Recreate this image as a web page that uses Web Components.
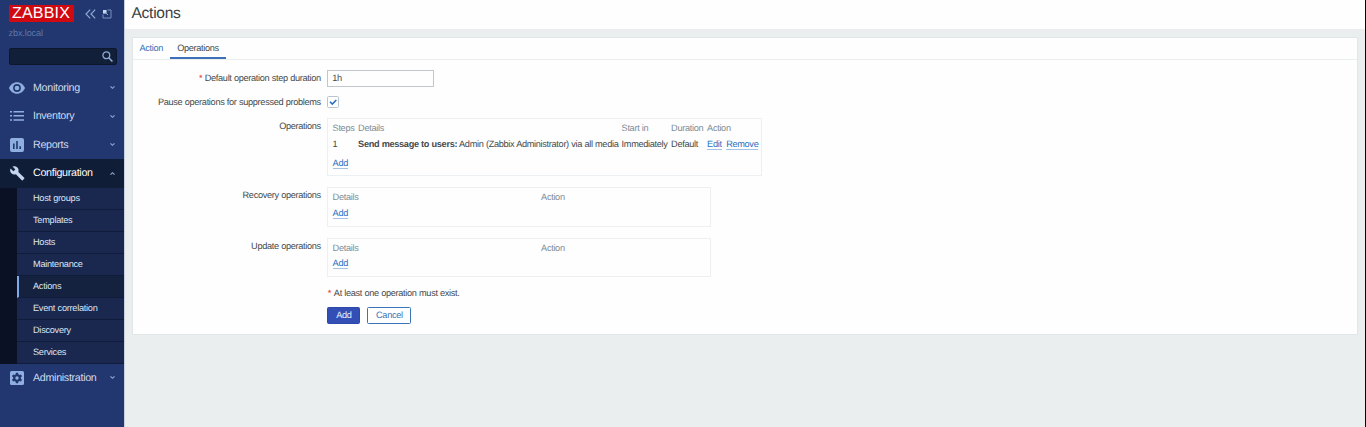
<!DOCTYPE html>
<html lang="en">
<head>
<meta charset="utf-8">
<title>Actions</title>
<style>
body{margin:0;height:427px;overflow:hidden;font:9.200px/12px "Liberation Sans",Arial,sans-serif;letter-spacing:-.32px;word-spacing:.15px;color:#43494c;text-rendering:geometricPrecision;background:#ebeeef}
</style>
</head>
<body>
<zbx-app></zbx-app>
<script>
const define=(name,html,setup)=>customElements.define(name,class extends HTMLElement{
  connectedCallback(){
    if(this.shadowRoot)return;
    const t=document.createElement('template');
    t.innerHTML=html;
    const root=this.attachShadow({mode:'open'});
    root.append(t.content.cloneNode(true));
    if(setup)setup(this,root);
  }
});

const icons={
  eye:'<path d="M8 2.200C4.400 2.200 1.300 4.600 0 8c1.300 3.400 4.400 5.800 8 5.800s6.700-2.400 8-5.800C14.700 4.600 11.600 2.200 8 2.200zm0 9.700a3.900 3.900 0 1 1 0-7.800 3.900 3.900 0 0 1 0 7.800z"/><circle cx="8" cy="8" r="2.300"/>',
  list:'<path d="M1 3h2v1.500H1zM1 7.100h2v1.500H1zM1 11.200h2v1.500H1zM4.500 3H15v1.500H4.500zM4.500 7.100H15v1.500H4.500zM4.500 11.200H15v1.500H4.500z"/>',
  chart:'<path fill-rule="evenodd" d="M3 1h10a2 2 0 0 1 2 2v10a2 2 0 0 1-2 2H3a2 2 0 0 1-2-2V3c0-1.100.9-2 2-2zm1 5.500v5.500h1.600V6.500zm3.200-2.500v8h1.600V4zm3.200 5.200V12H12V9.200z"/>',
  wrench:'<path transform="translate(.5 .5) scale(.65)" d="M22.700 19l-9.100-9.100c.9-2.300.4-5-1.500-6.900-2-2-5-2.400-7.400-1.300L9 6 6 9 1.600 4.700C.4 7.100.9 10.100 2.900 12.100c1.900 1.900 4.600 2.400 6.900 1.500l9.100 9.100c.4.400 1 .4 1.400 0l2.300-2.300c.5-.4.5-1.100.1-1.400z"/>',
  gear:'<rect x="1" y="1" width="14" height="14" rx="1.500"/><g fill="#22376f"><circle cx="8" cy="8" r="3.800"/><path d="M6.900 2.800h2.200l.5 3H6.400zM6.900 13.200h2.200l.5-3H6.400z"/><path transform="rotate(60 8 8)" d="M6.900 2.800h2.200l.5 3H6.400zM6.900 13.200h2.200l.5-3H6.400z"/><path transform="rotate(120 8 8)" d="M6.900 2.800h2.200l.5 3H6.400zM6.900 13.200h2.200l.5-3H6.400z"/></g><circle cx="8" cy="8" r="1.700"/>'
};

define('zbx-app',`<style>
:host{display:grid;grid-template-columns:124px 1fr 1px;height:427px}
.edge{background:#050708}
</style><zbx-sidebar></zbx-sidebar><zbx-page></zbx-page><div class="edge"></div>`);

define('zbx-sidebar',`<style>
:host{display:block;box-sizing:border-box;background:#22376f;color:#cfdaee;overflow:hidden}
header{display:flex;align-items:center;height:17px;padding:5px 0 0 8.500px}
.logo{background:#d10a12;color:#fff;width:65px;height:17px;border-radius:1px;font-size:16px;line-height:17px;text-align:center;letter-spacing:.2px}
.collapse{margin-left:11px}.pop{margin-left:6px}
.server{color:#5f78a8;padding:5px 0 0 8.500px;height:12px;letter-spacing:-.15px}
.search{display:flex;align-items:center;justify-content:flex-end;box-sizing:border-box;width:108px;height:17px;margin:9px 0 8.500px 8.500px;padding-right:3px;background:#121f38;border:1px solid #0c172d;border-radius:2px}
svg{display:block;fill:none;stroke:#8ea9d4}
.sub{padding-left:17px;background:#0a1124}
</style>
<header><div class="logo">ZABBIX</div>
<svg class="collapse" width="11" height="10" stroke-width="1.200"><path d="M5.200 .7L1 5l4.200 4.300M10.200 .7L6 5l4.200 4.300"/></svg>
<svg class="pop" width="10" height="10"><path d="M5.500 1h3.500v8H1V5.500" stroke="#7590bf"/><path d="M1 1h3.600v3.600H1z" fill="#c7d8f3" stroke="none"/><path d="M3.500 3.500l2.500 2.500" stroke-width="1"/></svg></header>
<div class="server">zbx.local</div>
<div class="search"><svg width="11" height="11" stroke-width="1.300"><circle cx="4.300" cy="4.300" r="3.400"/><path d="M6.800 6.800l3.600 3.700" stroke-width="1.600"/></svg></div>
<zbx-item icon="eye">Monitoring</zbx-item>
<zbx-item icon="list">Inventory</zbx-item>
<zbx-item icon="chart">Reports</zbx-item>
<zbx-item icon="wrench" open>Configuration</zbx-item>
<div class="sub">
<zbx-subitem>Host groups</zbx-subitem><zbx-subitem>Templates</zbx-subitem><zbx-subitem>Hosts</zbx-subitem><zbx-subitem>Maintenance</zbx-subitem><zbx-subitem active>Actions</zbx-subitem><zbx-subitem>Event correlation</zbx-subitem><zbx-subitem>Discovery</zbx-subitem><zbx-subitem>Services</zbx-subitem>
</div>
<zbx-item icon="gear">Administration</zbx-item>`);

define('zbx-item',`<style>
:host{display:grid;grid-template-columns:16px 1fr 7px;column-gap:8px;align-items:center;height:28.500px;padding:0 8.500px 0 9px;font-size:10.700px;letter-spacing:-.3px}
:host([open]){background:#101d37;color:#fff}
.i{fill:#8fafe0}:host([open]) .i{fill:#c4d5f1}
.c{fill:none;stroke:#8faad4;stroke-width:1.100}
:host([open]) .c{transform:rotate(180deg)}
svg{display:block}
span{padding-top:.4px}
</style><svg class="i" width="16" height="16" viewBox="0 0 16 16"></svg><span><slot></slot></span><svg class="c" width="7" height="5"><path d="M1.500 1.300l2 2 2-2"/></svg>`,
(el,r)=>{r.querySelector('.i').innerHTML=icons[el.getAttribute('icon')];});

define('zbx-subitem',`<style>
:host{display:block;box-sizing:border-box;height:22px;line-height:20px;padding-left:16px;background:#1a2850;border-bottom:1px solid #111c3c;color:#dce5f4;letter-spacing:-.27px}
:host([active]){background:#14213f;border-left:2px solid #7fa9e8;padding-left:14px}
</style><slot></slot>`);

define('zbx-page',`<style>
:host{display:block;min-width:0;border-left:1px solid #c7d0df}
h1{margin:0;height:29px;box-sizing:border-box;padding:5px 0 0 6.500px;background:#fefefe;font-size:15.600px;line-height:18px;font-weight:400;letter-spacing:-.3px;color:#3c4245}
.card{box-sizing:border-box;height:298px;margin:8px 7px 0 6.500px;background:#fefefe;border:1px solid #e1e6e8}
nav{display:flex;box-sizing:border-box;height:22px;border-bottom:1px solid #ebeeef;line-height:20px}
nav a{color:#2f72bd;padding:0 7px}
nav .on{color:#43494c;padding:0 7px;width:56px;box-sizing:border-box;height:21px;border-bottom:2px solid #3c70b8}
.foot{display:flex;gap:7px;margin:8px 0 0 194.900px}
.note{padding:11px 0 0 195.200px}
i{font-style:normal;color:#e33734}
.note i{margin-right:1px}
.input{box-sizing:border-box;width:107px;height:17px;border:1px solid #c0c8cb;padding-left:4.500px;line-height:15px}
.check{display:block;margin-top:2px}
</style>
<h1>Actions</h1>
<section class="card">
<nav><a>Action</a><span class="on">Operations</span></nav>
<zbx-row style="margin-top:10px;height:24px"><span slot="label"><i>*</i> Default operation step duration</span><div class="input">1h</div></zbx-row>
<zbx-row style="height:24px"><span slot="label">Pause operations for suppressed problems</span><svg class="check" width="12" height="12"><rect x=".5" y=".5" width="11" height="11" rx="1" fill="#fff" stroke="#b9c5cc"/><path d="M3 5.700l2.300 2.300 4-4" fill="none" stroke="#2870bd" stroke-width="1.600"/></svg></zbx-row>
<zbx-row style="height:69px"><span slot="label">Operations</span>
<zbx-table cols="25.500px 263.500px 49.500px 36px 1fr" style="width:435px;height:58px">
<span slot="head">Steps</span><span slot="head">Details</span><span slot="head">Start in</span><span slot="head">Duration</span><span slot="head">Action</span>
<span>1</span><span><b>Send message to users:</b> Admin (Zabbix Administrator) via all media</span><span>Immediately</span><span>Default</span><span><zbx-link>Edit</zbx-link><zbx-link style="margin-left:4.500px">Remove</zbx-link></span>
<zbx-link slot="add" style="margin-top:7px">Add</zbx-link></zbx-table></zbx-row>
<zbx-row style="height:51px"><span slot="label">Recovery operations</span>
<zbx-table cols="208.500px 1fr" style="width:384.500px;height:40px"><span slot="head">Details</span><span slot="head">Action</span><zbx-link slot="add" style="margin-top:4px">Add</zbx-link></zbx-table></zbx-row>
<zbx-row style="height:38px"><span slot="label">Update operations</span>
<zbx-table cols="208.500px 1fr" style="width:384.500px;height:39px"><span slot="head">Details</span><span slot="head">Action</span><zbx-link slot="add" style="margin-top:3px">Add</zbx-link></zbx-table></zbx-row>
<div class="note"><i>*</i> At least one operation must exist.</div>
<div class="foot"><zbx-button primary>Add</zbx-button><zbx-button>Cancel</zbx-button></div>
</section>`);

define('zbx-row',`<style>
:host{display:grid;grid-template-columns:188.400px 1fr;column-gap:5.900px;align-items:start}
.l{text-align:right;padding-top:2px;white-space:nowrap}
</style><div class="l"><slot name="label"></slot></div><slot></slot>`);

define('zbx-table',`<style>
:host{display:block;box-sizing:border-box;border:1px solid #edf0f2;padding:3px 3px 0 4.800px;white-space:nowrap}
.g{display:grid}
.h{color:#7b8c98}
.b{margin-top:4px}
</style><div class="g h"><slot name="head"></slot></div><div class="g b"><slot></slot></div><slot name="add"></slot>`,
(el,r)=>{r.querySelectorAll('.g').forEach(g=>g.style.gridTemplateColumns=el.getAttribute('cols'));
 if(![...el.children].some(c=>!c.slot))r.querySelector('.b').style.marginTop='0';});

define('zbx-link',`<style>
:host{display:inline-block;height:11px;line-height:12px;color:#2b70c2;border-bottom:1px solid #a3c2e4}
</style><slot></slot>`);

define('zbx-button',`<style>
:host{display:block;box-sizing:border-box;width:44px;text-align:center;height:17px;line-height:15px;border:1px solid #3974b7;border-radius:1.500px;color:#3974b7;background:#fff}
:host([primary]){width:33px;background:#334fb5;border-color:#2e49a8;color:#e8efff}
</style><slot></slot>`);
</script>
</body>
</html>
